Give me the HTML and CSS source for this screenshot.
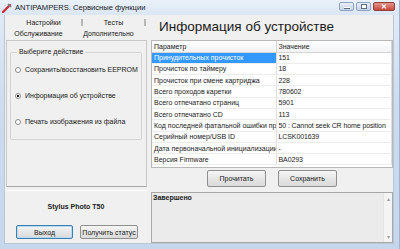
FILE: index.html
```html
<!DOCTYPE html>
<html lang="ru">
<head>
  <meta charset="UTF-8" />
  <title>ANTIPAMPERS. Сервисные функции</title>
  <link rel="stylesheet" href="styles.css">
</head>
<body>

  <div class="window">

    <!-- Title bar -->
    <div class="titlebar">
      <svg class="app-icon" width="10" height="10" viewBox="0 0 10 10">
        <path d="M1 9 L8 2" stroke="#c8323c" stroke-width="2.4" stroke-linecap="round"/>
        <path d="M6 1 L9 4" stroke="#7a7f88" stroke-width="1.6"/>
      </svg>
      <span class="title">ANTIPAMPERS. Сервисные функции</span>
      <div class="caption">
        <span class="cap min"><i></i></span>
        <span class="cap max"><i></i></span>
        <span class="cap close">✕</span>
      </div>
    </div>

    <div class="client">

      <!-- Left side -->
      <div class="left">
        <div class="tabs">
          <div class="tab-row back">
            <span class="tab">Настройки</span>
            <span class="tab">Тесты</span>
          </div>
          <div class="tab-row front">
            <span class="tab">Обслуживание</span>
            <span class="tab active">Дополнительно</span>
          </div>
        </div>

        <div class="tab-panel">
          <div class="group">
            <span class="legend">Выберите действие</span>
            <label class="radio"><span class="dot"></span>Сохранить/восстановить EEPROM</label>
            <label class="radio checked"><span class="dot"></span>Информация об устройстве</label>
            <label class="radio"><span class="dot"></span>Печать изображения из файла</label>
          </div>
        </div>

        <div class="device">
          <div class="model">Stylus Photo T50</div>
          <div class="device-buttons">
            <button class="btn focused">Выход</button>
            <button class="btn">Получить статус</button>
          </div>
        </div>
      </div>

      <!-- Right side -->
      <div class="right">
        <h1>Информация об устройстве</h1>

        <div class="grid">
          <table>
            <thead>
              <tr><th>Параметр</th><th>Значение</th></tr>
            </thead>
            <tbody>
              <tr class="selected"><td>Принудительных прочисток</td><td>151</td></tr>
              <tr><td>Прочисток по таймеру</td><td>18</td></tr>
              <tr><td>Прочисток при смене картриджа</td><td>228</td></tr>
              <tr><td>Всего проходов каретки</td><td>780602</td></tr>
              <tr><td>Всего отпечатано страниц</td><td>5901</td></tr>
              <tr><td>Всего отпечатано CD</td><td>113</td></tr>
              <tr><td>Код последней фатальной ошибки прин</td><td>50 : Cannot seek CR home position</td></tr>
              <tr><td>Серийный номер/USB ID</td><td>LCSK001639</td></tr>
              <tr><td>Дата первоначальной инициализации</td><td>-</td></tr>
              <tr><td>Версия Firmware</td><td>BA0293</td></tr>
            </tbody>
          </table>
        </div>

        <div class="actions">
          <button class="btn">Прочитать</button>
          <button class="btn">Сохранить</button>
        </div>

        <div class="log">
          <div class="log-text">Завершено</div>
          <div class="scrollbar">
            <span class="arrow">▴</span>
            <span class="arrow">▾</span>
          </div>
        </div>
      </div>

    </div>
  </div>

</body>
</html>
```

FILE: styles.css
```css
:root {
  --frame: #c4d6ec;
  --frame-dark: #9db5d3;
  --face: #f0f0f0;
  --select: #3399ff;
  --text: #1a1a1a;
}

* {
  box-sizing: border-box;
}

body {
  margin: 0;
  font-family: 'Liberation Sans', Arial, sans-serif;
  font-size: 7px;
  color: var(--text);
  background: var(--frame);
}

.window {
  width: 400px;
  height: 249px;
  display: flex;
  flex-direction: column;
  background: linear-gradient(to bottom, #e4edf8, #cddcef 40%, #c6d7ec);
  border-right: 1px solid var(--frame-dark);
  overflow: hidden;
}

/* Title bar */
.titlebar {
  height: 15px;
  display: flex;
  align-items: center;
  padding: 0 4px 0 2px;
  background: linear-gradient(to bottom, #eaf1fa, #dbe6f4);
}

.app-icon {
  margin-right: 3px;
}

.title {
  font-size: 7.6px;
  flex: 1;
}

.caption {
  display: flex;
  gap: 2px;
  align-self: flex-start;
  margin-top: 2px;
}

.cap {
  height: 9px;
  border: 1px solid #8ea4c0;
  border-radius: 2px;
  background: linear-gradient(to bottom, #e9eff7, #c5d3e6);
  display: flex;
  align-items: center;
  justify-content: center;
}

.cap.min,
.cap.max {
  width: 15px;
}

.cap.min i {
  width: 6px;
  height: 2px;
  margin-top: 3px;
  background: #fff;
  border-bottom: 1px solid #5d6f87;
}

.cap.max i {
  width: 6px;
  height: 5px;
  border: 1px solid #5d6f87;
  background: #fff;
}

.cap.close {
  width: 22px;
  border-color: #93403c;
  background: linear-gradient(to bottom, #e3968c, #c84a3c);
  color: #fff;
  font-size: 7px;
  font-weight: bold;
}

/* Client area */
.client {
  flex: 1;
  display: flex;
  margin: 0 5px 5px 4px;
  background: var(--face);
  border: 1px solid #b8c6d8;
  border-top: none;
}

.left {
  width: 142px;
  display: flex;
  flex-direction: column;
}

.tabs {
  height: 25px;
  padding: 2px 0 0 1px;
}

.tab-row {
  display: flex;
  height: 11px;
  align-items: center;
}

.tab-row .tab {
  text-align: center;
}

.tab-row.back .tab:first-child {
  width: 77px;
  border-right: 2px solid #b8b8b8;
}

.tab-row.back .tab:last-child {
  width: 63px;
  border-right: 2px solid #b8b8b8;
}

.tab-row.front .tab:first-child {
  width: 65px;
}

.tab-row.front .tab.active {
  width: 75px;
}

.tab-panel {
  height: 147px;
  margin-left: 1px;
  border: 1px solid #c8c8c8;
  border-bottom-color: #a8a8a8;
  padding: 11px 4px 0 3px;
}

.group {
  position: relative;
  height: 88px;
  border: 1px solid #d4d4d4;
  border-radius: 2px;
  padding: 11px 0 0 4px;
  display: flex;
  flex-direction: column;
  gap: 15px;
}

.legend {
  position: absolute;
  top: -5px;
  left: 6px;
  padding: 0 2px;
  background: var(--face);
}

.radio {
  display: flex;
  align-items: center;
  gap: 4px;
  height: 11px;
}

.dot {
  width: 6px;
  height: 6px;
  border: 1px solid #8a8a8a;
  border-radius: 50%;
  background: #fff;
}

.radio.checked .dot {
  background: radial-gradient(circle, #222 0 1.2px, #fff 1.6px);
}

.device {
  flex: 1;
  display: flex;
  flex-direction: column;
  border-top: 1px solid #fff;
  margin-top: 3px;
}

.model {
  font-weight: bold;
  text-align: center;
  padding-top: 12px;
  height: 34px;
}

.device-buttons {
  display: flex;
  gap: 7px;
  padding-left: 11px;
}

.btn {
  font-family: 'Liberation Sans', Arial, sans-serif;
  font-size: 7px;
  height: 14px;
  padding: 0;
  border: 1px solid #8f8f8f;
  border-radius: 2px;
  background: linear-gradient(to bottom, #f6f6f6, #e6e6e6 50%, #dadada);
  color: var(--text);
}

.device-buttons .btn:first-child {
  width: 57px;
}

.device-buttons .btn:last-child {
  width: 58px;
}

.btn.focused {
  border-color: #3c7fb1;
  box-shadow: inset 0 0 0 1px #b6dcf5;
}

/* Right side */
.right {
  flex: 1;
  display: flex;
  flex-direction: column;
  padding-left: 4px;
}

h1 {
  font-size: 13.5px;
  font-weight: normal;
  margin: 4px 0 0 8px;
  height: 21px;
}

.grid {
  height: 128px;
  background: #fff;
  border: 1px solid #b8b8b8;
  overflow: hidden;
}

table {
  width: 100%;
  border-collapse: collapse;
  table-layout: fixed;
}

th,
td {
  text-align: left;
  font-weight: normal;
  padding: 0 2px;
  white-space: nowrap;
  overflow: hidden;
}

th {
  height: 11px;
  background: linear-gradient(to bottom, #fff, #f1f2f4);
  border-bottom: 1px solid #d5d5d5;
  border-right: 1px solid #d5d5d5;
}

th:first-child,
td:first-child {
  width: 124px;
}

td {
  height: 11.3px;
  border-bottom: 1px solid #ececec;
  border-right: 1px solid #dedede;
}

td:last-child {
  letter-spacing: -0.1px;
}

tr.selected td:first-child {
  background: var(--select);
  color: #fff;
}

.actions {
  display: flex;
  justify-content: center;
  gap: 12px;
  padding-top: 2px;
  height: 24px;
}

.actions .btn {
  width: 59px;
  height: 17px;
}

.log {
  flex: 1;
  display: flex;
  border: 1px solid #a8a8a8;
  background: #ebebeb;
}

.log-text {
  flex: 1;
  font-weight: bold;
  padding: 1px;
}

.scrollbar {
  width: 9px;
  display: flex;
  flex-direction: column;
  justify-content: space-between;
  background: #f4f4f4;
  border-left: 1px solid #e4e4e4;
  color: #a0a0a0;
  font-size: 6px;
  text-align: center;
  padding: 2px 0;
}
```
